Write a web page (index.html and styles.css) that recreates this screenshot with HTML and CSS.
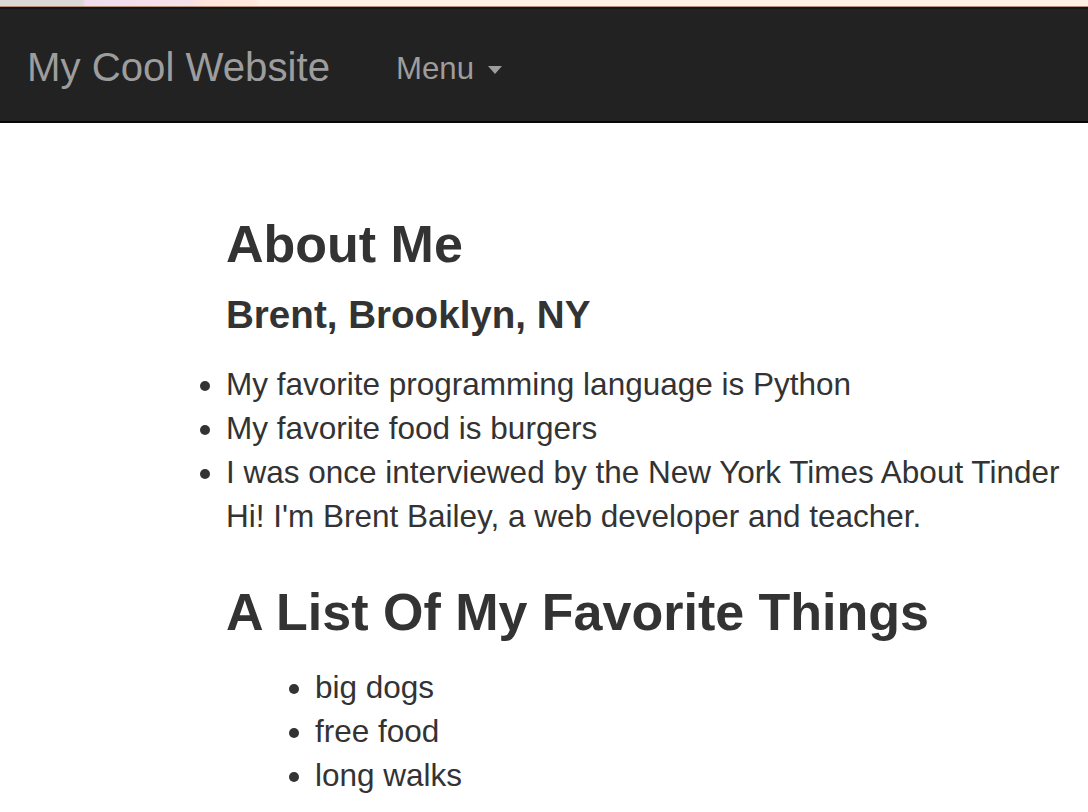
FILE: index.html
```html
<!DOCTYPE html>
<html lang="en">
<head>
<meta charset="utf-8">
<title>My Cool Website</title>
<link rel="stylesheet" href="styles.css">
</head>
<body>
<div class="chrome"></div>
<nav class="navbar">
  <a class="brand" href="#">My Cool Website</a>
  <a class="menu" href="#">Menu <span class="caret"></span></a>
</nav>
<main class="content">
  <h1 class="title">About Me</h1>
  <h4 class="subtitle">Brent, Brooklyn, NY</h4>
  <ul class="facts">
    <li>My favorite programming language is Python</li>
    <li>My favorite food is burgers</li>
    <li>I was once interviewed by the New York Times <a href="#" class="plain">About Tinder</a></li>
  </ul>
  <p class="bio">Hi! I'm Brent Bailey, a web developer and teacher.</p>
  <h1 class="title second">A List Of My Favorite Things</h1>
  <ul class="things">
    <li>big dogs</li>
    <li>free food</li>
    <li>long walks</li>
  </ul>
</main>
</body>
</html>
```
FILE: styles.css
```css
html, body {
  margin: 0;
  padding: 0;
  background: #fff;
}
body {
  font-family: "Liberation Sans", Arial, Helvetica, sans-serif;
  color: #333;
  font-size: 31.5px;
  line-height: 44px;
}
.chrome {
  height: 6px;
  background: linear-gradient(to right, #dcd8d8 0, #dcd8d8 82px, #f1dcef 86px, #f6e0e8 190px, #fde4dc 205px, #fde8dd 255px, #fdefe6 260px, #fdefe6 100%);
  border-bottom: 1px solid #b3907f;
  box-shadow: 0 2px 0 #141414;
  margin-bottom: 2px;
}
.navbar {
  background: #222;
  border-bottom: 2px solid #080808;
  display: flex;
  align-items: center;
  padding: 5px 0 0 27px;
  box-sizing: border-box;
  height: 114px;
}
.navbar a {
  text-decoration: none;
  color: #9d9d9d;
}
.brand {
  font-size: 40.2px;
  line-height: 44px;
  margin-right: 66px;
}
.menu {
  font-size: 31.2px;
  line-height: 44px;
  display: flex;
  align-items: center;
  padding-top: 2px;
}
.caret {
  display: inline-block;
  width: 0;
  height: 0;
  margin-left: 14px;
  border-top: 8px solid #9d9d9d;
  border-left: 7px solid transparent;
  border-right: 7px solid transparent;
  margin-top: 2px;
}
.content {
  padding: 48px 0 0 226px;
}
.title {
  font-size: 52px;
  line-height: 58px;
  font-weight: bold;
  margin: 44px 0 20px;
}
.title.second {
  margin-top: 45px;
  margin-bottom: 24px;
}
.subtitle {
  font-size: 38.6px;
  line-height: 43.6px;
  font-weight: bold;
  margin: 0 0 25px;
}
.facts {
  margin: 0;
  padding: 0;
}
.things {
  margin: 0;
  padding-left: 89px;
}
.plain {
  color: #333;
  text-decoration: none;
}
.bio {
  margin: 0;
}
```
